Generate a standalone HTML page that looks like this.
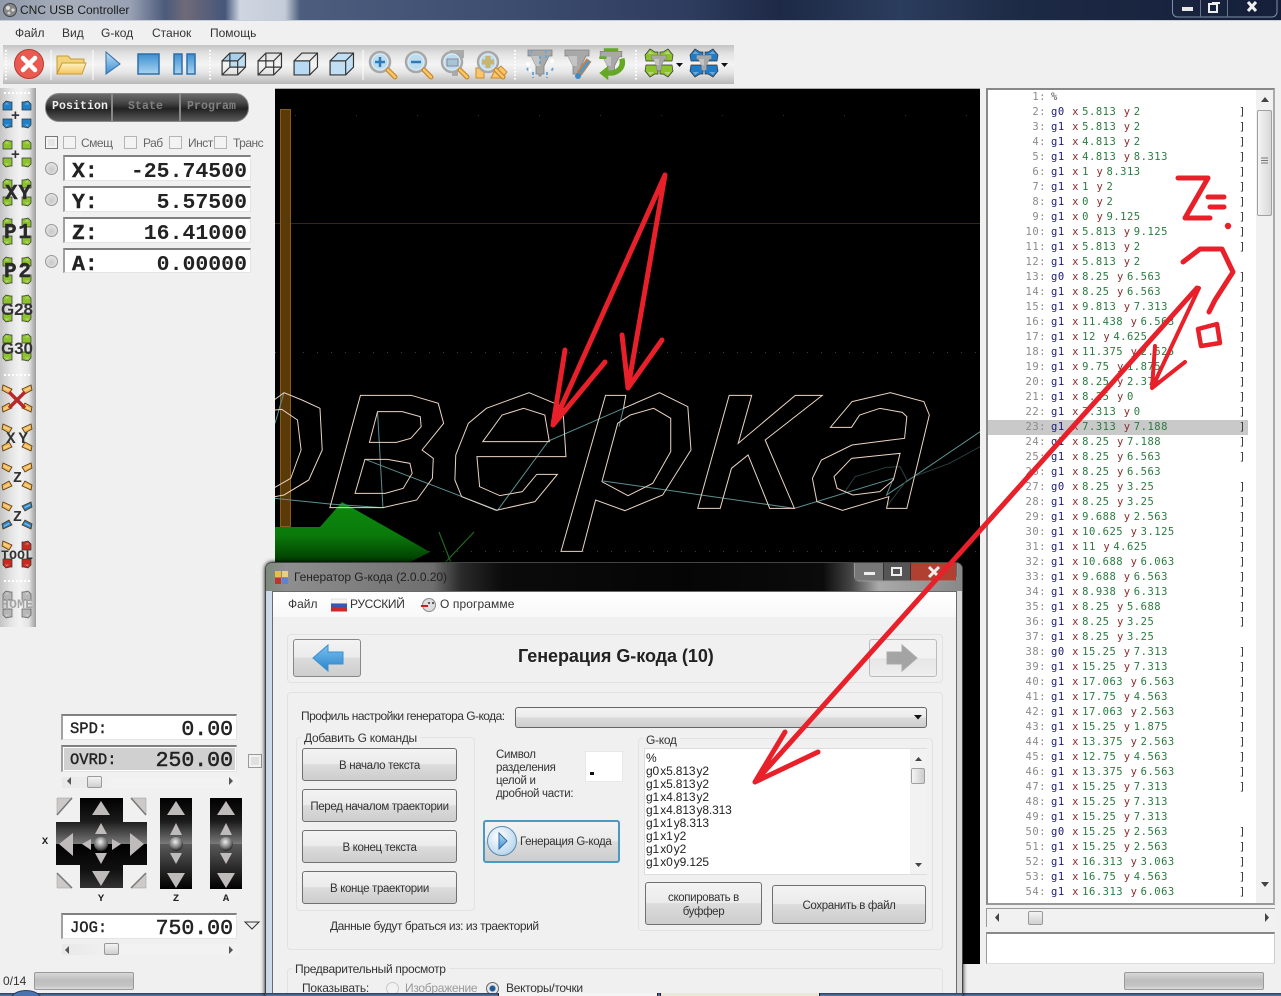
<!DOCTYPE html>
<html lang="ru"><head><meta charset="utf-8"><title>CNC USB Controller</title>
<style>
*{box-sizing:border-box}
html,body{margin:0;padding:0;width:1281px;height:996px;overflow:hidden;background:#f0f0f0;font-family:"Liberation Sans",sans-serif;color:#333}
#root{position:relative;width:1281px;height:996px;overflow:hidden}
.a{position:absolute}
.t{position:absolute;white-space:nowrap;font-size:12px;line-height:14px}
.ro{position:absolute;background:#fff;border-top:2px solid #808080;border-left:2px solid #a0a0a0;border-right:1px solid #e4e4e4;border-bottom:1px solid #e4e4e4;font-family:"Liberation Mono",monospace;color:#222}
.ro b{position:absolute;left:7px;top:3px;font-size:21.5px;line-height:24px;-webkit-text-stroke:.4px #222}
.ro i{position:absolute;right:3px;top:3px;font-size:21.5px;line-height:24px;font-style:normal;font-weight:bold}
.ro.s b{font-size:15.5px;font-weight:normal;left:7px;top:4px;line-height:18px;-webkit-text-stroke:.4px #222}
.ro.s i{font-size:21.5px;font-weight:normal;-webkit-text-stroke:.5px #222;top:2px;line-height:25px;right:3px}
.rd{position:absolute;width:13px;height:13px;border-radius:50%;border:1px solid #999;background:radial-gradient(circle at 50% 60%,#c8c8c8,#ededed)}
.cb{position:absolute;width:13px;height:13px;border:1px solid #b4b4b4;background:#f3f3f3}
.sb{position:absolute;height:11px;background:linear-gradient(90deg,#e8e8e8,#f2f2f2 30%,#f2f2f2)}
.th{position:absolute;top:-1px;height:12px;border:1px solid #9a9a9a;border-radius:2px;background:linear-gradient(#f4f4f4,#cfcfcf)}
.btn{position:absolute;border:1px solid #707070;border-radius:3px;background:linear-gradient(#f3f3f3 0,#ebebeb 48%,#dcdcdc 50%,#cdcdcd 100%);font-size:11.5px;text-align:center;color:#333;letter-spacing:-.35px;display:flex;align-items:center;justify-content:center;line-height:14px;padding-top:3px}
.pn{position:absolute;border:1px solid #e2e2e2;border-radius:4px}
.lg{position:absolute;background:#f0f0f0;padding:0 3px;font-size:12px;line-height:13px;white-space:nowrap;letter-spacing:-.3px}
.pr{position:absolute;height:18px;border:1px solid #9a9a9a;border-radius:2px;background:linear-gradient(#d8d8d8,#bdbdbd 45%,#c4c4c4 80%,#dcdcdc)}
#gc{position:absolute;left:988px;top:90px;width:266px;height:813px;overflow:hidden;font:10.5px/15px "DejaVu Sans Mono",monospace;letter-spacing:.5px}
#gc p{position:relative;height:15px;margin:0;white-space:nowrap}
#gc s{display:inline-block;width:58px;text-align:right;text-decoration:none;color:#8a8a8a}
#gc b{font-weight:normal;color:#1a1a78;margin-left:5px}
#gc i{font-style:normal;color:#8a2c2c;margin-left:7.5px;margin-right:3.2px}
#gc u{text-decoration:none;color:#2a7a40}
#gc em{position:absolute;left:251px;top:0;font-style:normal;color:#333}
#gc p.h{background:#c9c9c9;width:260px}
.dl div{height:13px}
</style></head><body><div id="root">

<!-- title bar -->
<div class="a" style="left:0;top:0;width:1281px;height:20px;background:linear-gradient(90deg,#8f99aa 0,#a8afbb 70px,#98a2b4 130px,#4c5b7b 165px,#706a78 185px,#46567a 225px,#cfd6e2 240px,#c4ccd8 285px,#4d5d7d 300px,#3d4e71 500px,#2e3c5e 690px,#1d2946 780px,#2b3d5d 900px,#1d2a45 1020px,#151f3a 1281px)"></div>
<div class="a" style="left:0;top:20px;width:1281px;height:1px;background:#c8ced8"></div>
<svg class="a" style="left:2px;top:2px" width="16" height="16"><circle cx="8" cy="8" r="6.5" fill="#888" stroke="#444"/><circle cx="6" cy="6" r="2" fill="#ddd"/><circle cx="11" cy="8" r="1.5" fill="#ddd"/><circle cx="7" cy="11" r="1.5" fill="#ccc"/></svg>
<div class="t" style="left:20px;top:3px;font-size:12px;color:#1c1c1c">CNC USB Controller</div>
<svg class="a" style="left:1172px;top:0" width="106" height="19">
<path d="M.5 0V12a5 5 0 0 0 5 5H100a5 5 0 0 0 5-5V0" fill="none" stroke="#8090a8"/><path d="M28.500 0V17M55.500 0V17" stroke="#67758e"/>
<rect x="10" y="7" width="11" height="4" fill="#e8e8e8"/><rect x="37" y="4" width="8" height="8" fill="none" stroke="#eee" stroke-width="2"/><rect x="40" y="2" width="8" height="2" fill="#eee"/>
<path d="M76 2l8 9M84 2l-8 9" stroke="#f0f0f0" stroke-width="3"/></svg>

<!-- menu -->
<div class="t" style="left:15px;top:26px">Файл</div>
<div class="t" style="left:62px;top:26px">Вид</div>
<div class="t" style="left:101px;top:26px">G-код</div>
<div class="t" style="left:152px;top:26px">Станок</div>
<div class="t" style="left:210px;top:26px">Помощь</div>

<!-- toolbar -->
<div class="a" style="left:3px;top:45px;width:731px;height:39px;background:linear-gradient(#c4c4c4,#e2e2e2 22%,#f4f4f4 50%,#e6e6e6 70%,#b8b8b8)"></div>

<svg class="a" style="left:0;top:0" width="780" height="90">
<defs>
<linearGradient id="bl" x1="0" y1="0" x2="0" y2="1"><stop offset="0" stop-color="#bfe0f6"/><stop offset="1" stop-color="#3d8fd0"/></linearGradient>
<linearGradient id="bl2" x1="0" y1="0" x2="0" y2="1"><stop offset="0" stop-color="#3d8fd0"/><stop offset="1" stop-color="#a8d4f2"/></linearGradient>
<linearGradient id="fo" x1="0" y1="0" x2="0" y2="1"><stop offset="0" stop-color="#fff3c4"/><stop offset="1" stop-color="#f4c45c"/></linearGradient>
<g id="m"><circle r="10" fill="#dcecf6" stroke="#a8a8a8" stroke-width="2.500"/><circle r="7.500" fill="#bcdcf0"/><path d="M8 8L15 15" stroke="#c88a30" stroke-width="5" stroke-linecap="round"/><path d="M8 8L15 15" stroke="#fbc66a" stroke-width="2.500" stroke-linecap="round"/></g>
<g id="n"><path d="M-12-14H12V-8H9L4 2V10H1V12H-1V10H-4V2L-9-8H-12Z" fill="#a8a8a8" stroke="#808080" stroke-width=".8"/><path d="M-9-8L-4 2H0V-8Z" fill="#c4c4c4"/></g>
<g id="cu"><path d="M-14-4H6V14H-14ZM-14-4L-4-14H16V4L6 14M6-4L16-14" fill="none" stroke="#333" stroke-width="1.500"/></g>
<g id="tb"><path d="M1 7L6 1L11 4H14V13H2Z" stroke="#333" stroke-width=".7" fill="currentColor"/><path d="M3 7L6 3L10 6H4Z" fill="#fff" opacity=".35"/></g>
<g id="tq"><use href="#tb"/><use href="#tb" transform="matrix(-1 0 0 1 30 0)"/><use href="#tb" transform="matrix(1 0 0 -1 0 30)"/><use href="#tb" transform="matrix(-1 0 0 -1 30 30)"/></g>
</defs>
<path d="M6 50V80M210 50V80M515 50V80M636 50V80" stroke="#fff" stroke-width="2" stroke-dasharray="1.500 2"/>
<path d="M51 50V80M93 50V80M363 50V80" stroke="#fff"/>
<circle cx="29" cy="64" r="14.500" fill="#ea5a50" stroke="#b83a30"/><path d="M23 58L35 70M35 58L23 70" stroke="#fff" stroke-width="4.500" stroke-linecap="round"/>
<path d="M57 56h11l3 3h13v5H62l-5 9z" fill="#f2d37a" stroke="#c49a38"/><path d="M62 63h24l-4 11H57z" fill="url(#fo)" stroke="#c49a38"/>
<path d="M106 52L120 64L106 74Z" fill="url(#bl)" stroke="#2f6ea8"/>
<rect x="138" y="54" width="21" height="20" fill="url(#bl2)" stroke="#2f6ea8" stroke-width="1.500"/>
<rect x="174" y="54" width="8" height="20" fill="url(#bl2)" stroke="#2f6ea8" stroke-width="1.500"/><rect x="187" y="54" width="8" height="20" fill="url(#bl2)" stroke="#2f6ea8" stroke-width="1.500"/>
<g transform="translate(233 64) scale(.78)"><path d="M-4-14H16V4H-4Z" fill="#bcdcf0"/><path d="M-14-4L-4-14H16L6-4Z" fill="#a8d0ec"/><use href="#cu"/><path d="M-14 14L-4 4H16M-4 4V-14" fill="none" stroke="#333" stroke-width="1.500"/></g>
<g transform="translate(269 64) scale(.78)"><use href="#cu"/><path d="M-14 14L-4 4H16M-4 4V-14" fill="none" stroke="#333" stroke-width="1.500"/></g>
<g transform="translate(305 64) scale(.78)"><path d="M-14-4H6V14H-14Z" fill="#b8daf2"/><use href="#cu"/></g>
<g transform="translate(341 64) scale(.78)"><path d="M-14-4L-4-14H16V4L6 14H-14Z" fill="#c0dff4"/><use href="#cu"/></g>
<g transform="translate(380 62)"><use href="#m"/><path d="M-5 0H5M0-5V5" stroke="#2f7ab8" stroke-width="2.500"/></g>
<g transform="translate(416 62)"><use href="#m"/><path d="M-5 0H5" stroke="#2f7ab8" stroke-width="2.500"/></g>
<g transform="translate(452 62)"><path d="M-2-12H12V-4H6V14H0V-4H-2Z" fill="#aaa"/><use href="#m"/><rect x="-5" y="-3" width="11" height="7" fill="#a8c4d4" stroke="#889"/></g>
<g transform="translate(488 62)"><path d="M-12 6h8v10h-8zM6 10l7-6 6 6-5 6H3z" fill="#fbc66a" stroke="#c88a30"/><use href="#m"/><path d="M-6 0H6M0-6V6" stroke="#c8b470" stroke-width="5"/></g>
<g transform="translate(540 64)"><use href="#n"/><path d="M-8-14l-2 6M6-14v8M-13 4l2 4M13 4l-2 4M-7 8v6M7 8v6M0-8v8" stroke="#68a8d8" stroke-width="2" stroke-dasharray="3 2"/><circle cx="-12" cy="0" r="2" fill="#fff"/><circle cx="12" cy="-3" r="2" fill="#fff"/><circle cx="-10" cy="6" r="1.500" fill="#fff"/></g>
<g transform="translate(577 64)"><use href="#n"/><path d="M2 10L12-4" stroke="#c8804a" stroke-width="6"/><path d="M3 9L12-3" stroke="#4a9ad0" stroke-width="3"/><circle cx="1" cy="12" r="3" fill="#3a8ac8"/></g>
<g transform="translate(611 64) scale(.9)"><use href="#n"/><path d="M12-6C15 4 7 11-4 10" fill="none" stroke="#64a824" stroke-width="6"/><path d="M-3 2V18L-13 10Z" fill="#64a824"/><path d="M-13-7H-5M-8-16H8" stroke="#64a824" stroke-width="3"/></g>
<g transform="translate(644 48)"><use href="#tq" color="#8cc22c"/><use href="#n" transform="translate(15 16) scale(.62)"/></g>
<g transform="translate(689 48)"><use href="#tq" color="#1f7cc8"/><use href="#n" transform="translate(15 16) scale(.62)"/></g>
<path d="M676 63h7l-3.500 4zM721 63h7l-3.500 4z" fill="#111"/>
</svg>

<!-- left vertical toolbar -->
<div class="a" style="left:0;top:88px;width:36px;height:539px;background:linear-gradient(90deg,#c4c4c4,#e4e4e4 30%,#f2f2f2 55%,#e4e4e4 80%,#9c9c9c)"></div>
<svg class="a" style="left:0;top:88px" width="36" height="540" font-family="Liberation Mono" font-weight="bold">
<defs>
<g id="co"><path d="M3 5L6 2L10 3H12V11H3Z" stroke="#333" stroke-width=".7" fill="currentColor"/><path d="M4.500 6L6.500 3.500L9.500 5.500H5Z" fill="#fff" opacity=".35"/></g>
<g id="q"><use href="#co"/><use href="#co" transform="matrix(-1 0 0 1 34 0)"/><use href="#co" transform="matrix(1 0 0 -1 0 31)"/><use href="#co" transform="matrix(-1 0 0 -1 34 31)"/></g>
<g id="od"><path d="M3 2L12 6L9 11L2 7Z" stroke="#55360c" stroke-width=".8" fill="currentColor"/><path d="M4 4L10 7L9 8.500L3.500 5.500Z" fill="#fff" opacity=".4"/></g>
<g id="o"><use href="#od"/><use href="#od" transform="matrix(-1 0 0 1 34 0)"/><use href="#od" transform="matrix(1 0 0 -1 0 31)"/><use href="#od" transform="matrix(-1 0 0 -1 34 31)"/></g>
</defs>
<path d="M4 5H31M4 287H31M4 493H31" stroke="#fff" stroke-width="2" stroke-dasharray="2 2"/>
<use href="#q" y="11" color="#2080c8"/><text x="11" y="32" font-size="15" font-family="Liberation Sans" fill="#333">+</text>
<use href="#q" y="50" color="#8cc22c"/><text x="11" y="71" font-size="15" font-family="Liberation Sans" fill="#333">+</text>
<use href="#q" y="89" color="#8cc22c"/><text x="5" y="111" font-size="21" fill="#2a2a2a" stroke="#2a2a2a" stroke-width=".4" textLength="26">XY</text>
<use href="#q" y="128" color="#8cc22c"/><text x="4" y="150" font-size="21" fill="#2a2a2a" stroke="#2a2a2a" stroke-width=".4" textLength="27">P1</text>
<use href="#q" y="167" color="#8cc22c"/><text x="4" y="189" font-size="21" fill="#2a2a2a" stroke="#2a2a2a" stroke-width=".4" textLength="27">P2</text>
<use href="#q" y="205" color="#8cc22c"/><text x="1" y="227" font-size="17" font-family="Liberation Sans" fill="#333" textLength="32">G28</text>
<use href="#q" y="244" color="#8cc22c"/><text x="1" y="266" font-size="17" font-family="Liberation Sans" fill="#333" textLength="32">G30</text>
<use href="#o" y="295" color="#f2b44c"/><path d="M9 304L25 320M25 304L9 320" stroke="#b82a2a" stroke-width="3.500"/>
<use href="#o" y="334" color="#f2b44c"/><text x="6" y="355" font-size="16" fill="#333" textLength="22">XY</text>
<use href="#o" y="373" color="#f2b44c"/><text x="13" y="394" font-size="15" fill="#333">Z</text>
<use href="#od" y="412" color="#f2b44c"/><g color="#2080c8"><use href="#od" transform="matrix(-1 0 0 1 34 412)"/><use href="#od" transform="matrix(1 0 0 -1 0 443)"/><use href="#od" transform="matrix(-1 0 0 -1 34 443)"/></g><text x="13" y="433" font-size="15" fill="#333">Z</text>
<use href="#od" y="451" color="#f2b44c"/><g color="#c82a20"><use href="#co" transform="matrix(-1 0 0 1 34 451)"/><use href="#co" transform="matrix(1 0 0 -1 0 482)"/><use href="#co" transform="matrix(-1 0 0 -1 34 482)"/></g><text x="1" y="471" font-size="13" fill="#333" textLength="32">TOOL</text>
<g opacity=".75"><use href="#q" y="501" color="#a8a8a8"/></g><text x="1" y="520" font-size="13" fill="#a4a4a4" textLength="32">HOME</text>
</svg>

<!-- position tabs -->
<div class="a" style="left:45px;top:93px;width:204px;height:29px;border-radius:14px;background:linear-gradient(#6a6a6a,#4a4a4a 30%,#222 55%,#5a5a5a 100%);border:1px solid #888"></div>
<div class="a" style="left:111px;top:94px;width:2px;height:27px;background:#888"></div>
<div class="a" style="left:179px;top:94px;width:2px;height:27px;background:#888"></div>
<div class="t" style="left:52px;top:100px;font:bold 11.5px/13px 'Liberation Mono',monospace;color:#eee;letter-spacing:.1px">Position</div>
<div class="t" style="left:128px;top:100px;font:bold 11.5px/13px 'Liberation Mono',monospace;color:#808080;letter-spacing:.1px">State</div>
<div class="t" style="left:187px;top:100px;font:bold 11.5px/13px 'Liberation Mono',monospace;color:#808080;letter-spacing:.1px">Program</div>

<div class="cb" style="left:45px;top:136px;background:#e6e6e6;border-color:#777;box-shadow:inset 0 0 0 2px #f4f4f4"></div>
<div class="cb" style="left:63px;top:136px"></div><div class="t" style="left:81px;top:136px;color:#666;letter-spacing:-.5px">Смещ</div>
<div class="cb" style="left:124px;top:136px"></div><div class="t" style="left:143px;top:136px;color:#666;letter-spacing:-.5px">Раб</div>
<div class="cb" style="left:169px;top:136px"></div><div class="t" style="left:188px;top:136px;color:#666;letter-spacing:-.5px">Инст</div>
<div class="cb" style="left:214px;top:136px"></div><div class="t" style="left:233px;top:136px;color:#666;letter-spacing:-.5px">Транс</div>

<div class="rd" style="left:45px;top:162px"></div><div class="rd" style="left:45px;top:193px"></div><div class="rd" style="left:45px;top:224px"></div><div class="rd" style="left:45px;top:255px"></div>
<div class="ro" style="left:63px;top:155px;width:188px;height:26px"><b>X:</b><i>-25.74500</i></div>
<div class="ro" style="left:63px;top:186px;width:188px;height:26px"><b>Y:</b><i>5.57500</i></div>
<div class="ro" style="left:63px;top:217px;width:188px;height:26px"><b>Z:</b><i>16.41000</i></div>
<div class="ro" style="left:63px;top:248px;width:188px;height:25px"><b>A:</b><i>0.00000</i></div>

<!-- lower left -->
<div class="ro s" style="left:61px;top:714px;width:176px;height:26px"><b>SPD:</b><i>0.00</i></div>
<div class="ro s" style="left:61px;top:745px;width:176px;height:27px;background:#d0d0d0;box-shadow:inset 0 0 0 1px #fff"><b>OVRD:</b><i>250.00</i></div>
<div class="cb" style="left:248px;top:754px;width:14px;height:14px;border-color:#999;background:#e0e0e0;box-shadow:inset 0 0 0 2px #f2f2f2"></div>
<div class="sb" style="left:62px;top:777px;width:176px"><div class="th" style="left:25px;width:15px"></div></div>
<div class="sb" style="left:62px;top:944px;width:176px"><div class="th" style="left:42px;width:15px"></div></div>
<svg class="a" style="left:0;top:770px" width="270" height="170">
<defs>
<linearGradient id="up" x1="0" y1="0" x2="0" y2="1"><stop offset="0" stop-color="#000"/><stop offset=".5" stop-color="#1a1a1a"/><stop offset="1" stop-color="#7a7a7a"/></linearGradient>
<linearGradient id="dn" x1="0" y1="0" x2="0" y2="1"><stop offset="0" stop-color="#000"/><stop offset=".6" stop-color="#111"/><stop offset="1" stop-color="#333"/></linearGradient>
<linearGradient id="dn2" x1="0" y1="0" x2="0" y2="1"><stop offset="0" stop-color="#5a5a5a"/><stop offset="1" stop-color="#000"/></linearGradient>
<radialGradient id="bal" cx=".45" cy=".35" r=".7"><stop offset="0" stop-color="#eee"/><stop offset=".6" stop-color="#777"/><stop offset="1" stop-color="#111"/></radialGradient>
<g id="col"><rect x="-16" y="28" width="32" height="46" fill="url(#up)"/><rect x="-16" y="74" width="32" height="45" fill="url(#dn2)"/><path d="M0 31L9 45H-9ZM0 53L6 65H-6ZM-6 83H6L0 94ZM-9 103H9L0 118Z" fill="#c0bbbb"/><circle cy="74" r="7" fill="url(#bal)"/></g>
</defs>
<path d="M80 28H123V52H147V74H56V52H80Z" fill="url(#up)"/><path d="M56 74H147V95H123V118H80V95H56Z" fill="url(#dn)"/>
<path d="M101 31L110 45H92ZM101 53L107 64H95ZM92 101H110L101 116ZM95 83H107L101 94ZM59 74L73 63V86ZM82 74L91 69V80ZM144 74L130 63V86ZM121 74L112 69V80Z" fill="#c0bbbb"/>
<circle cx="101" cy="74" r="7" fill="url(#bal)"/>
<path d="M57 45L72 28H57ZM146 45L131 28H146ZM57 103L72 118H57ZM146 103L131 118H146Z" fill="#cdc9c9" stroke="#999" stroke-width=".5"/>
<path d="M57 45L72 28M146 45L131 28M57 103L72 118M146 103L131 118" stroke="#777" stroke-width="1.500"/>
<use href="#col" x="176"/><use href="#col" x="226"/>
<g font-family="Liberation Mono" font-weight="bold" font-size="10.500" fill="#222" text-anchor="middle"><text x="45" y="74">X</text><text x="101" y="131">Y</text><text x="176" y="131">Z</text><text x="226" y="131">A</text></g>
<path d="M245 152H259L252 159Z" fill="#eee" stroke="#333"/>
<path d="M71 7L67 11L71 15ZM229 7L233 11L229 15Z" fill="#555"/>
</svg>
<svg class="a" style="left:60px;top:944px" width="180" height="12"><path d="M9 2L5 6L9 10ZM169 2L173 6L169 10Z" fill="#555"/></svg>
<div class="ro s" style="left:61px;top:913px;width:176px;height:26px"><b>JOG:</b><i>750.00</i></div>
<div class="t" style="left:3px;top:974px;font-size:12px">0/14</div>
<div class="pr" style="left:34px;top:972px;width:100px"></div>
<div class="pr" style="left:1124px;top:972px;width:140px"></div>

<!-- canvas -->
<div class="a" style="left:275px;top:88px;width:705px;height:876px;background:#000;border-top:1px solid #aaa"></div>
<svg class="a" style="left:275px;top:88px" width="705" height="480">
<defs><linearGradient id="gr" x1="0" y1="0" x2="0" y2="1"><stop offset="0" stop-color="#0e8a0e"/><stop offset=".55" stop-color="#0a7a0a"/><stop offset="1" stop-color="#013a01"/></linearGradient></defs>
<path d="M0 135.500H705" stroke="#2f2a12"/>
<path d="M0 264.500H705M0 463.500H705" stroke="#3c3c3c" stroke-dasharray="1 13"/>
<path d="M20 27.500H705" stroke="#333" stroke-dasharray="1 60"/>
<rect x="5.500" y="21.500" width="10" height="417" fill="#5a3a08" stroke="#8a5c12"/>
<path d="M0 439H45L67 414L155 464L135 474H0Z" fill="url(#gr)"/>
<g transform="translate(0 292) scale(.4497 .3333)" fill="none" stroke="#5a9090" stroke-width="1" >
<path vector-effect="non-scaling-stroke" d="M0 355L122 372L240 383L228 95M0 130L20 38M200 238L495 391L608 183L775 85L765 140M730 303L1155 385L1375 295L1360 345L1568 155"/>
<path vector-effect="non-scaling-stroke" stroke="#2a4040" d="M1265 340L1290 290L1360 262L1390 260L1405 300L1360 380M1420 290L1500 250L1568 200"/>
</g>
<g transform="translate(0 292) scale(.4497 .3333)" fill="none" stroke="#ecd4c4">
<path vector-effect="non-scaling-stroke" d="M0 58L20 38L60 60L100 85L105 210L75 300L20 345L0 350M0 90L15 88L50 120L58 210L35 295L0 322"/>
<path vector-effect="non-scaling-stroke" d="M190 46H303L363 70L375 130L327 210L352 235L350 295L315 360L240 383H122ZM228 95H283L323 110L325 140L302 175L270 187H210ZM200 238H250L300 250L305 280L285 325L245 340H178Z"/>
<path vector-effect="non-scaling-stroke" d="M565 38L640 80L647 230H449L455 320L500 347L550 335L582 283H628L578 365L492 391L415 350L400 300L402 225L430 130L470 85ZM553 85L600 105L610 185H462L505 105Z"/>
<path vector-effect="non-scaling-stroke" d="M735 46H780L775 85L855 38L918 80L925 210L862 345L778 392L713 360L683 514H636ZM842 85L880 115V215L840 310L785 347L727 305L762 130L790 105Z"/>
<path vector-effect="non-scaling-stroke" d="M1010 46H1060L1030 190L1157 46H1217L1090 180L1155 385H1100L1052 225L1015 265L990 385H940Z"/>
<path vector-effect="non-scaling-stroke" d="M1283 65L1368 38L1443 65L1455 105L1405 385H1360L1365 350L1262 391L1205 365L1195 295L1215 240L1283 195L1400 175L1405 110L1395 97L1345 85L1300 105L1282 142H1235ZM1390 220L1375 300L1345 335L1285 345L1250 325L1243 290L1282 235Z"/>
</g>
<path d="M164 444L178 480M199 444L165 480" stroke="#1f6a1f" stroke-width="1.200"/>
</svg>

<!-- right panel -->
<div class="a" style="left:986px;top:88px;width:289px;height:817px;background:#fff;border:2px solid #888;border-right-color:#aaa;border-bottom-color:#999"></div>
<div class="a" style="left:1256px;top:90px;width:17px;height:813px;background:#f1f1f1"></div>
<div class="a" style="left:1257px;top:110px;width:15px;height:106px;border:1px solid #a0a0a0;border-radius:2px;background:linear-gradient(90deg,#f4f4f4,#d8d8d8)"></div>
<svg class="a" style="left:1256px;top:90px" width="17" height="813"><path d="M5 12L9 7L13 12ZM5 792H13L9 797Z" fill="#444"/><path d="M5 68H12M5 70.500H12M5 73H12" stroke="#777"/></svg>
<div id="gc">
<p><s>1:</s><b style="color:#555">%</b></p>
<p><s>2:</s><b>g0</b><i>x</i><u>5.813</u><i>y</i><u>2</u><em>]</em></p>
<p><s>3:</s><b>g1</b><i>x</i><u>5.813</u><i>y</i><u>2</u><em>]</em></p>
<p><s>4:</s><b>g1</b><i>x</i><u>4.813</u><i>y</i><u>2</u><em>]</em></p>
<p><s>5:</s><b>g1</b><i>x</i><u>4.813</u><i>y</i><u>8.313</u><em>]</em></p>
<p><s>6:</s><b>g1</b><i>x</i><u>1</u><i>y</i><u>8.313</u><em>]</em></p>
<p><s>7:</s><b>g1</b><i>x</i><u>1</u><i>y</i><u>2</u><em>]</em></p>
<p><s>8:</s><b>g1</b><i>x</i><u>0</u><i>y</i><u>2</u><em>]</em></p>
<p><s>9:</s><b>g1</b><i>x</i><u>0</u><i>y</i><u>9.125</u><em>]</em></p>
<p><s>10:</s><b>g1</b><i>x</i><u>5.813</u><i>y</i><u>9.125</u><em>]</em></p>
<p><s>11:</s><b>g1</b><i>x</i><u>5.813</u><i>y</i><u>2</u><em>]</em></p>
<p><s>12:</s><b>g1</b><i>x</i><u>5.813</u><i>y</i><u>2</u></p>
<p><s>13:</s><b>g0</b><i>x</i><u>8.25</u><i>y</i><u>6.563</u><em>]</em></p>
<p><s>14:</s><b>g1</b><i>x</i><u>8.25</u><i>y</i><u>6.563</u><em>]</em></p>
<p><s>15:</s><b>g1</b><i>x</i><u>9.813</u><i>y</i><u>7.313</u><em>]</em></p>
<p><s>16:</s><b>g1</b><i>x</i><u>11.438</u><i>y</i><u>6.563</u><em>]</em></p>
<p><s>17:</s><b>g1</b><i>x</i><u>12</u><i>y</i><u>4.625</u><em>]</em></p>
<p><s>18:</s><b>g1</b><i>x</i><u>11.375</u><i>y</i><u>2.625</u><em>]</em></p>
<p><s>19:</s><b>g1</b><i>x</i><u>9.75</u><i>y</i><u>1.875</u><em>]</em></p>
<p><s>20:</s><b>g1</b><i>x</i><u>8.25</u><i>y</i><u>2.375</u><em>]</em></p>
<p><s>21:</s><b>g1</b><i>x</i><u>8.25</u><i>y</i><u>0</u><em>]</em></p>
<p><s>22:</s><b>g1</b><i>x</i><u>7.313</u><i>y</i><u>0</u><em>]</em></p>
<p class="h"><s>23:</s><b>g1</b><i>x</i><u>7.313</u><i>y</i><u>7.188</u><em>]</em></p>
<p><s>24:</s><b>g1</b><i>x</i><u>8.25</u><i>y</i><u>7.188</u><em>]</em></p>
<p><s>25:</s><b>g1</b><i>x</i><u>8.25</u><i>y</i><u>6.563</u><em>]</em></p>
<p><s>26:</s><b>g1</b><i>x</i><u>8.25</u><i>y</i><u>6.563</u></p>
<p><s>27:</s><b>g0</b><i>x</i><u>8.25</u><i>y</i><u>3.25</u><em>]</em></p>
<p><s>28:</s><b>g1</b><i>x</i><u>8.25</u><i>y</i><u>3.25</u><em>]</em></p>
<p><s>29:</s><b>g1</b><i>x</i><u>9.688</u><i>y</i><u>2.563</u><em>]</em></p>
<p><s>30:</s><b>g1</b><i>x</i><u>10.625</u><i>y</i><u>3.125</u><em>]</em></p>
<p><s>31:</s><b>g1</b><i>x</i><u>11</u><i>y</i><u>4.625</u><em>]</em></p>
<p><s>32:</s><b>g1</b><i>x</i><u>10.688</u><i>y</i><u>6.063</u><em>]</em></p>
<p><s>33:</s><b>g1</b><i>x</i><u>9.688</u><i>y</i><u>6.563</u><em>]</em></p>
<p><s>34:</s><b>g1</b><i>x</i><u>8.938</u><i>y</i><u>6.313</u><em>]</em></p>
<p><s>35:</s><b>g1</b><i>x</i><u>8.25</u><i>y</i><u>5.688</u><em>]</em></p>
<p><s>36:</s><b>g1</b><i>x</i><u>8.25</u><i>y</i><u>3.25</u><em>]</em></p>
<p><s>37:</s><b>g1</b><i>x</i><u>8.25</u><i>y</i><u>3.25</u></p>
<p><s>38:</s><b>g0</b><i>x</i><u>15.25</u><i>y</i><u>7.313</u><em>]</em></p>
<p><s>39:</s><b>g1</b><i>x</i><u>15.25</u><i>y</i><u>7.313</u><em>]</em></p>
<p><s>40:</s><b>g1</b><i>x</i><u>17.063</u><i>y</i><u>6.563</u><em>]</em></p>
<p><s>41:</s><b>g1</b><i>x</i><u>17.75</u><i>y</i><u>4.563</u><em>]</em></p>
<p><s>42:</s><b>g1</b><i>x</i><u>17.063</u><i>y</i><u>2.563</u><em>]</em></p>
<p><s>43:</s><b>g1</b><i>x</i><u>15.25</u><i>y</i><u>1.875</u><em>]</em></p>
<p><s>44:</s><b>g1</b><i>x</i><u>13.375</u><i>y</i><u>2.563</u><em>]</em></p>
<p><s>45:</s><b>g1</b><i>x</i><u>12.75</u><i>y</i><u>4.563</u><em>]</em></p>
<p><s>46:</s><b>g1</b><i>x</i><u>13.375</u><i>y</i><u>6.563</u><em>]</em></p>
<p><s>47:</s><b>g1</b><i>x</i><u>15.25</u><i>y</i><u>7.313</u><em>]</em></p>
<p><s>48:</s><b>g1</b><i>x</i><u>15.25</u><i>y</i><u>7.313</u></p>
<p><s>49:</s><b>g1</b><i>x</i><u>15.25</u><i>y</i><u>7.313</u></p>
<p><s>50:</s><b>g0</b><i>x</i><u>15.25</u><i>y</i><u>2.563</u><em>]</em></p>
<p><s>51:</s><b>g1</b><i>x</i><u>15.25</u><i>y</i><u>2.563</u><em>]</em></p>
<p><s>52:</s><b>g1</b><i>x</i><u>16.313</u><i>y</i><u>3.063</u><em>]</em></p>
<p><s>53:</s><b>g1</b><i>x</i><u>16.75</u><i>y</i><u>4.563</u><em>]</em></p>
<p><s>54:</s><b>g1</b><i>x</i><u>16.313</u><i>y</i><u>6.063</u><em>]</em></p>
</div>
<div class="a" style="left:986px;top:908px;width:289px;height:19px;background:#f1f1f1;border-top:1px solid #999;border-left:1px solid #999"></div>
<div class="a" style="left:1028px;top:911px;width:15px;height:14px;border:1px solid #999;border-radius:2px;background:linear-gradient(#f4f4f4,#cfcfcf)"></div>
<svg class="a" style="left:986px;top:908px" width="289" height="19"><path d="M9 9.500L13 5V14ZM279 5L283 9.500L279 14Z" fill="#444"/></svg>
<div class="a" style="left:986px;top:932px;width:289px;height:32px;background:#fff;border-top:2px solid #888;border-left:1px solid #999;border-right:1px solid #ccc;border-bottom:1px solid #ddd"></div>

<!-- taskbar -->
<div class="a" style="left:0;top:993px;width:1281px;height:3px;background:linear-gradient(#2c3c58,#5a80b0)"></div>
<div class="a" style="left:10px;top:990px;width:32px;height:20px;border-radius:50%;background:#4a74b0;border:1px solid #2a3a58"></div>

<!-- dialog -->
<div class="a" style="left:265px;top:562px;width:698px;height:434px;border-radius:7px 7px 0 0;background:linear-gradient(90deg,#c8d8e8,#d0dde8 1%,#d8d8d8 99%);border:1px solid #444;border-bottom:0;box-shadow:0 0 4px #000"></div>
<div class="a" style="left:266px;top:563px;width:696px;height:28px;border-radius:6px 6px 0 0;background:linear-gradient(90deg,#7a8a7a 0,#8f8f8f 3%,#6e6e6e 24%,#2a2a2a 28%,#0b0b0b 34%,#050505 60%,#0b0b0b 80%,#444 84%,#aaa 88%,#888 100%)"></div>
<svg class="a" style="left:275px;top:571px" width="14" height="13"><rect width="6" height="6" x="0" y="0" fill="#e8c040"/><rect width="6" height="6" x="7" y="0" fill="#e8d080"/><rect width="6" height="6" x="0" y="7" fill="#c83030"/><rect width="6" height="6" x="7" y="7" fill="#6080d0"/></svg>
<div class="t" style="left:294px;top:570px;color:#222;letter-spacing:-.05px">Генератор G-кода (2.0.0.20)</div>
<svg class="a" style="left:854px;top:563px" width="104" height="20">
<path d="M.5 0V13a5 5 0 0 0 5 5H98a5 5 0 0 0 5-5V0" fill="#333" stroke="#999"/>
<rect x="1" y="0" width="28" height="17.500" fill="#777"/><rect x="30" y="0" width="26" height="17.500" fill="#555"/><rect x="57" y="0" width="45" height="17.500" fill="#b04030"/>
<rect x="10" y="9" width="11" height="3" fill="#eee"/><rect x="38" y="5" width="9" height="7" fill="none" stroke="#eee" stroke-width="2"/>
<path d="M75 4L85 14M85 4L75 14" stroke="#eee" stroke-width="3"/></svg>

<div class="a" style="left:272px;top:591px;width:685px;height:405px;background:#f0f0f0;border:1px solid #6a6a6a;border-bottom:0"></div>
<div class="a" style="left:273px;top:592px;width:683px;height:25px;background:linear-gradient(#fff,#f8f8f8)"></div>
<div class="t" style="left:288px;top:597px">Файл</div>
<svg class="a" style="left:331px;top:598px" width="16" height="14"><rect width="16" height="4.500" y="1" fill="#f4f4f4" stroke="#ccc" stroke-width=".5"/><rect width="16" height="4" y="5.500" fill="#3858b8"/><rect width="16" height="4" y="9.500" fill="#d02828"/></svg>
<div class="t" style="left:350px;top:597px;letter-spacing:-.35px">РУССКИЙ</div>
<svg class="a" style="left:420px;top:596px" width="17" height="17"><circle cx="9" cy="9" r="6.500" fill="#ddd" stroke="#888"/><path d="M1 10H8" stroke="#c02020" stroke-width="2"/><circle cx="9" cy="7" r="1" fill="#333"/><circle cx="13" cy="7" r="1" fill="#333"/></svg>
<div class="t" style="left:440px;top:597px;letter-spacing:.1px">О программе</div>

<div class="pn" style="left:287px;top:634px;width:656px;height:49px"></div>
<div class="btn" style="left:293px;top:639px;width:68px;height:38px;border-color:#888"></div>
<svg class="a" style="left:293px;top:639px" width="68" height="38"><defs><linearGradient id="ab" x1="0" y1="0" x2="0" y2="1"><stop offset="0" stop-color="#7cc0ee"/><stop offset="1" stop-color="#2a84cc"/></linearGradient></defs><path d="M20 19L35 6V13H50V25H35V32Z" fill="url(#ab)" stroke="#3a90d0"/></svg>
<div class="t" style="left:518px;top:647px;font-size:18px;line-height:19px;font-weight:bold;color:#222;letter-spacing:-.05px">Генерация G-кода (10)</div>
<div class="a" style="left:869px;top:639px;width:68px;height:38px;border:1px solid #bbb;border-radius:3px;background:linear-gradient(#f2f2f2 50%,#e6e6e6 52%,#eee)"></div>
<svg class="a" style="left:869px;top:639px" width="68" height="38"><path d="M48 19L33 6V13H18V25H33V32Z" fill="#a4a4a4" stroke="#aaa"/></svg>

<div class="pn" style="left:287px;top:692px;width:656px;height:258px"></div>
<div class="t" style="left:301px;top:709px;letter-spacing:-.55px">Профиль настройки генератора G-кода:</div>
<div class="btn" style="left:515px;top:707px;width:412px;height:21px;border-color:#666"></div>
<svg class="a" style="left:913px;top:713px" width="10" height="8"><path d="M1 2H9L5 6.500Z" fill="#111"/></svg>

<div class="pn" style="left:296px;top:737px;width:179px;height:174px"></div>
<div class="lg" style="left:301px;top:732px">Добавить G команды</div>
<div class="btn" style="left:302px;top:748px;width:155px;height:33px">В начало текста</div>
<div class="btn" style="left:302px;top:789px;width:155px;height:33px">Перед началом траектории</div>
<div class="btn" style="left:302px;top:830px;width:155px;height:33px">В конец текста</div>
<div class="btn" style="left:302px;top:871px;width:155px;height:33px">В конце траектории</div>

<div class="t" style="left:496px;top:749px;font-size:11.500px;line-height:13px;letter-spacing:-.3px">Символ<br>разделения<br>целой и<br>дробной части:</div>
<div class="a" style="left:585px;top:751px;width:38px;height:31px;background:#fff;border:1px solid #e8e8e8"></div>
<div class="a" style="left:590px;top:772px;width:4px;height:3px;background:#111"></div>
<div class="btn" style="left:483px;top:820px;width:137px;height:43px;border:2px solid #4a9ac0;justify-content:flex-start;padding-left:35px;padding-top:1px">Генерация G-кода</div>
<svg class="a" style="left:485px;top:824px" width="34" height="34"><defs><radialGradient id="pb" cx=".4" cy=".35" r=".8"><stop offset="0" stop-color="#fff"/><stop offset="1" stop-color="#a8cce8"/></radialGradient></defs><circle cx="17" cy="17" r="14.500" fill="url(#pb)" stroke="#5a8ab0"/><path d="M14 9L22 17L14 25Z" fill="url(#bl)" stroke="#2f6ea8"/></svg>

<div class="t" style="left:330px;top:919px;letter-spacing:-.45px">Данные будут браться из: из траекторий</div>

<div class="pn" style="left:638px;top:738px;width:295px;height:193px"></div>
<div class="lg" style="left:643px;top:734px;padding:0 3px">G-код</div>
<div class="a" style="left:644px;top:748px;width:283px;height:127px;background:#fff;border:1px solid #ddd"></div>
<div class="a dl" style="left:646px;top:752px;font-size:12px;line-height:13px;color:#222;letter-spacing:-.15px;word-spacing:-2px">
<div>%</div><div>g0 x5.813 y2</div><div>g1 x5.813 y2</div><div>g1 x4.813 y2</div><div>g1 x4.813 y8.313</div><div>g1 x1 y8.313</div><div>g1 x1 y2</div><div>g1 x0 y2</div><div>g1 x0 y9.125</div></div>
<div class="a" style="left:910px;top:749px;width:17px;height:125px;background:#f2f2f2"></div>
<div class="a" style="left:911px;top:768px;width:14px;height:16px;border:1px solid #a0a0a0;border-radius:2px;background:linear-gradient(90deg,#f4f4f4,#ccc)"></div>
<svg class="a" style="left:910px;top:749px" width="17" height="125"><path d="M5 12L8.500 8L12 12ZM5 114H12L8.500 118Z" fill="#444"/></svg>
<div class="btn" style="left:645px;top:882px;width:117px;height:43px">скопировать в<br>буффер</div>
<div class="btn" style="left:772px;top:885px;width:154px;height:39px">Сохранить в файл</div>

<div class="a" style="left:287px;top:968px;width:656px;height:30px;border:1px solid #e2e2e2;border-radius:4px 4px 0 0"></div>
<div class="lg" style="left:292px;top:963px">Предварительный просмотр</div>
<div class="t" style="left:302px;top:981px;letter-spacing:-.2px">Показывать:</div>
<div class="rd" style="left:386px;top:982px;background:#f2f2f2;border-color:#c8c8c8"></div>
<div class="t" style="left:405px;top:981px;color:#999;letter-spacing:-.3px">Изображение</div>
<div class="rd" style="left:486px;top:982px;background:radial-gradient(circle,#1f5a96 0 2.500px,#e8e8e8 3.500px);border-color:#666"></div>
<div class="t" style="left:506px;top:981px;letter-spacing:-.3px">Векторы/точки</div>
<div class="a" style="left:266px;top:993px;width:696px;height:3px;background:linear-gradient(#2c3c58,#5a80b0)"></div>
<div class="a" style="left:498px;top:993px;width:160px;height:3px;background:#f4f4f4;border-left:1px solid #223;border-right:1px solid #223"></div>
<div class="a" style="left:660px;top:993px;width:160px;height:3px;background:#e8e8d8;border-left:1px solid #223;border-right:1px solid #223"></div>

<!-- red annotations -->
<svg class="a" style="left:0;top:0;z-index:10" width="1281" height="996" fill="none" stroke="#e8202a" stroke-linecap="round" stroke-linejoin="round">
<g stroke-width="5">
<path d="M665 175L553 425L565 350M553 425L605 362M665 175L628 388L622 335M628 388L662 340"/>
<path d="M1197 288L755 782L785 732M755 782L818 752"/>
<path stroke-width="4" d="M1199 288L1152 388L1155 346M1152 388L1185 362"/>
<path d="M1178 178H1208L1185 218H1210M1208 197H1224M1210 207H1224"/>
<path d="M1183 262L1200 249H1222L1233 272L1215 300L1209 312"/>
<path stroke-width="4.500" d="M1198 329L1217 324L1220 343L1201 346Z"/>
</g>
<circle cx="1228" cy="226" r="2.500" fill="#e8202a" stroke-width="1.500"/>
</svg>
</div></body></html>
